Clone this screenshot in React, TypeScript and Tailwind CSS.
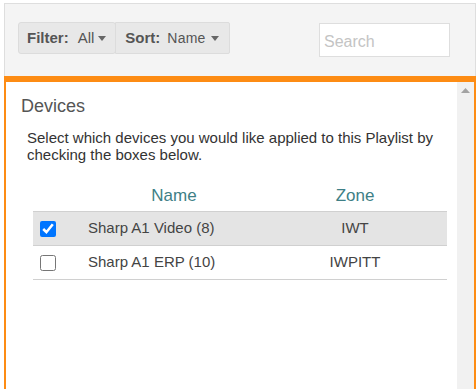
import { useState } from "react";

const devices = [
  { name: "Sharp A1 Video (8)", zone: "IWT", checked: true },
  { name: "Sharp A1 ERP (10)", zone: "IWPITT", checked: false },
];

function Caret() {
  return (
    <svg width="8" height="5" viewBox="0 0 8 5" className="inline-block">
      <path d="M0 0 H8 L4 5 Z" fill="#666" />
    </svg>
  );
}

export default function App() {
  const [rows, setRows] = useState(devices);

  const toggle = (i: number) => {
    setRows(rows.map((r, j) => (j === i ? { ...r, checked: !r.checked } : r)));
  };

  return (
    <div
      className="h-[389px] w-[476px] overflow-hidden bg-white pl-[4px] pt-[3px]"
      style={{ fontFamily: '"Liberation Sans", Arial, sans-serif' }}
    >
      <div className="flex h-[386px] w-[472px] flex-col">
        {/* toolbar */}
        <div className="flex h-[73px] shrink-0 items-start border border-b-0 border-[#dedede] bg-[#f4f4f4]">
          <div className="ml-[13px] mt-[18px] flex h-[32px] text-[15px] text-[#555]">
            <button className="flex items-center rounded-[3px] border border-[#dcdcdc] bg-[#e8e8e8] pl-[8px] pr-[9px]">
              <span className="font-bold">Filter:</span>
              <span className="ml-[9px] mr-[4px]">All</span>
              <Caret />
            </button>
            <button className="-ml-px flex items-center rounded-r-[2px] border border-[#dcdcdc] bg-[#e8e8e8] pl-[9px] pr-[10px]">
              <span className="font-bold">Sort:</span>
              <span className="ml-[7px] mr-[5px] text-[14px] tracking-[0.2px]">Name</span>
              <Caret />
            </button>
          </div>
          <input
            placeholder="Search"
            className="ml-auto mr-[25px] mt-[19px] h-[34px] w-[131px] border border-[#dedede] bg-white px-[4px] pt-[4px] text-[16px] text-[#333] outline-none placeholder:text-[#c4c4c4]"
          />
        </div>

        {/* content */}
        <div className="flex min-h-0 flex-1 border-x-2 border-t-[6px] border-[#fd8c14]">
          <div className="flex-1 pl-[15px] pr-[10px] pt-[14px]">
            <h2 className="text-[18px] leading-[21px] text-[#555]">Devices</h2>
            <p className="ml-[6px] mt-[12px] text-[15px] leading-[17px] text-[#333]">
              Select which devices you would like applied to this Playlist by checking the boxes below.
            </p>
            <div className="ml-[12px] mt-[17px]">
              <div className="grid h-[31px] grid-cols-[47px_188px_1fr] items-center text-[17px] text-[#3e7f86]">
                <div />
                <div className="text-center">Name</div>
                <div className="pr-[5px] text-center">Zone</div>
              </div>
              <div className="border-t border-[#d0d0d0]">
                {rows.map((r, i) => (
                  <div
                    key={r.name}
                    className={`grid h-[34px] grid-cols-[47px_188px_1fr] items-center border-b border-[#d0d0d0] text-[15px] text-[#444] ${
                      r.checked ? "bg-[#e4e4e4]" : "bg-white"
                    }`}
                  >
                    <div className="flex pl-[7px]">
                      <input
                        type="checkbox"
                        checked={r.checked}
                        onChange={() => toggle(i)}
                        className="m-0 h-[16px] w-[16px] accent-[#0075ff]"
                      />
                    </div>
                    <div className="pl-[8px]">{r.name}</div>
                    <div className="pr-[5px] text-center">{r.zone}</div>
                  </div>
                ))}
              </div>
            </div>
          </div>
          {/* scrollbar */}
          <div className="flex w-[17px] shrink-0 justify-center bg-[#f1f1f1] pt-[6px]">
            <svg width="9" height="5" viewBox="0 0 9 5">
              <path d="M0 5 L4.5 0 L9 5 Z" fill="#a3a3a3" />
            </svg>
          </div>
        </div>
      </div>
    </div>
  );
}
